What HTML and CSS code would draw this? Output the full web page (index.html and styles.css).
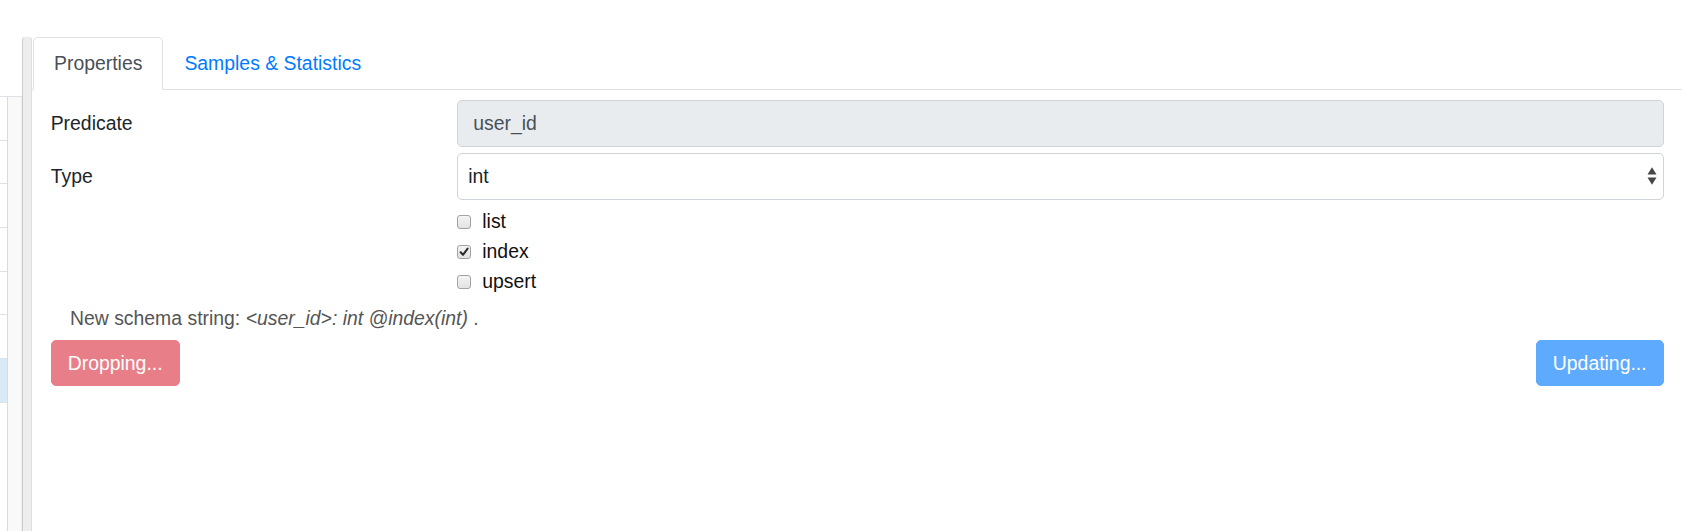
FILE: index.html
```html
<!DOCTYPE html>
<html lang="en">
<head>
<meta charset="utf-8">
<title>Schema</title>
<link rel="stylesheet" href="styles.css">
</head>
<body>
<div class="app">
  <aside class="list-panel">
    <div class="list-table">
      <div class="list-col">
        <div class="list-row"></div>
        <div class="list-row"></div>
        <div class="list-row"></div>
        <div class="list-row"></div>
        <div class="list-row"></div>
        <div class="list-row"></div>
        <div class="list-row selected"></div>
      </div>
      <div class="list-gutter"></div>
    </div>
  </aside>
  <div class="splitter"></div>
  <main class="pane">
    <ul class="tabs">
      <li class="tab active">Properties</li>
      <li class="tab">Samples &amp; Statistics</li>
    </ul>
    <div class="tab-body">
      <div class="form-row">
        <label class="form-label">Predicate</label>
        <div class="field readonly">user_id</div>
      </div>
      <div class="form-row row-select">
        <label class="form-label">Type</label>
        <div class="field select">
          <span>int</span>
          <svg class="arrows" width="10" height="18" viewBox="0 0 10 18"><path d="M0.5 7.5 L5 0.3 L9.5 7.5 Z M0.5 10.5 L5 17.7 L9.5 10.5 Z" fill="#474747"/></svg>
        </div>
      </div>
      <div class="form-row">
        <div></div>
        <div class="checks">
          <div class="check"><span class="cb"></span><span>list</span></div>
          <div class="check"><span class="cb"><svg width="12" height="12" viewBox="0 0 12 12"><path d="M2.6 6.2 L5 8.8 L9.6 2.6" stroke="#2b2b2b" stroke-width="2" fill="none" stroke-linecap="round" stroke-linejoin="round"/></svg></span><span>index</span></div>
          <div class="check"><span class="cb"></span><span>upsert</span></div>
        </div>
      </div>
      <p class="schema">New schema string: <em>&lt;user_id&gt;: int @index(int)</em> .</p>
      <div class="actions">
        <button class="btn danger" disabled>Dropping...</button>
        <button class="btn primary" disabled>Updating...</button>
      </div>
    </div>
  </main>
</div>
</body>
</html>
```

FILE: styles.css
```css
html, body {
  margin: 0;
  padding: 0;
  background: #fff;
}

body {
  font-family: "Liberation Sans", Arial, Helvetica, sans-serif;
  font-size: 19.4px;
  color: #212529;
}

.app {
  display: flex;
  height: 531px;
  overflow: hidden;
}

/* left list panel */
.list-panel {
  width: 22px;
  flex: none;
  padding-top: 96px;
  box-sizing: border-box;
}

.list-table {
  display: flex;
  height: 100%;
  border-top: 1px solid #dee2e6;
}

.list-col {
  width: 8px;
  box-sizing: border-box;
  border-right: 1px solid #dadada;
}

.list-row {
  height: 43.7px;
  box-sizing: border-box;
  border-bottom: 1px solid #dee2e6;
}

.list-row.selected {
  background: #d9eaf7;
}

.list-gutter {
  flex: 1;
  background: #f9f9f9;
  border-right: 1px solid #ededed;
}

/* splitter */
.splitter {
  width: 10px;
  flex: none;
  box-sizing: border-box;
  margin-top: 37px;
  border-left: 1px solid #cdcdcd;
  border-right: 1px solid #dedede;
  background: #ededed;
  border-radius: 3px 3px 0 0;
}

/* main pane */
.pane {
  flex: 1;
  min-width: 0;
}

.tabs {
  list-style: none;
  margin: 0;
  padding: 37px 0 0 1px;
  display: flex;
  border-bottom: 1px solid #dee2e6;
}

.tab {
  height: 53px;
  box-sizing: border-box;
  padding: 0 20px 1px;
  display: flex;
  align-items: center;
  border: 1px solid transparent;
  border-radius: 5px 5px 0 0;
  margin-bottom: -1px;
  color: #007bff;
}

.tab.active {
  color: #495057;
  background: #fff;
  border-color: #dee2e6 #dee2e6 #fff;
}

.tab-body {
  padding: 10px 18.4px 0 18.7px;
}

.form-row {
  display: grid;
  grid-template-columns: 406px 1fr;
  align-items: center;
}

.row-select {
  margin-top: 6.3px;
}

.form-label {
  color: #212529;
}

.field {
  height: 46.7px;
  box-sizing: border-box;
  border: 1px solid #ced4da;
  border-radius: 5px;
  display: flex;
  align-items: center;
}

.readonly {
  background: #e9ecef;
  color: #495057;
  padding: 0 15.6px;
}

.select {
  background: #fff;
  color: #212529;
  padding: 0 5.4px 0 10.6px;
  justify-content: space-between;
}

.arrows {
  display: block;
}

.checks {
  margin-top: 7.3px;
}

.check {
  height: 30px;
  display: flex;
  align-items: center;
  gap: 11.6px;
  color: #111;
}

.cb {
  width: 14px;
  height: 14px;
  box-sizing: border-box;
  border: 1px solid #a3a3a3;
  border-radius: 3px;
  background: linear-gradient(#f4f4f4, #e2e2e2);
  display: flex;
  align-items: center;
  justify-content: center;
}

.cb svg {
  display: block;
}

.schema {
  margin: 7.2px 0 0 19.3px;
  line-height: 29px;
  color: #555;
}

.actions {
  margin-top: 6.5px;
  display: flex;
  justify-content: space-between;
}

.btn {
  height: 46.7px;
  box-sizing: border-box;
  padding: 0 16px;
  border: 1px solid transparent;
  border-radius: 5px;
  font-family: inherit;
  font-size: 19.4px;
  color: #fff;
}

.danger {
  background: #e87e88;
  border-color: #e87e88;
}

.primary {
  background: #5eaaff;
  border-color: #5eaaff;
}
```
